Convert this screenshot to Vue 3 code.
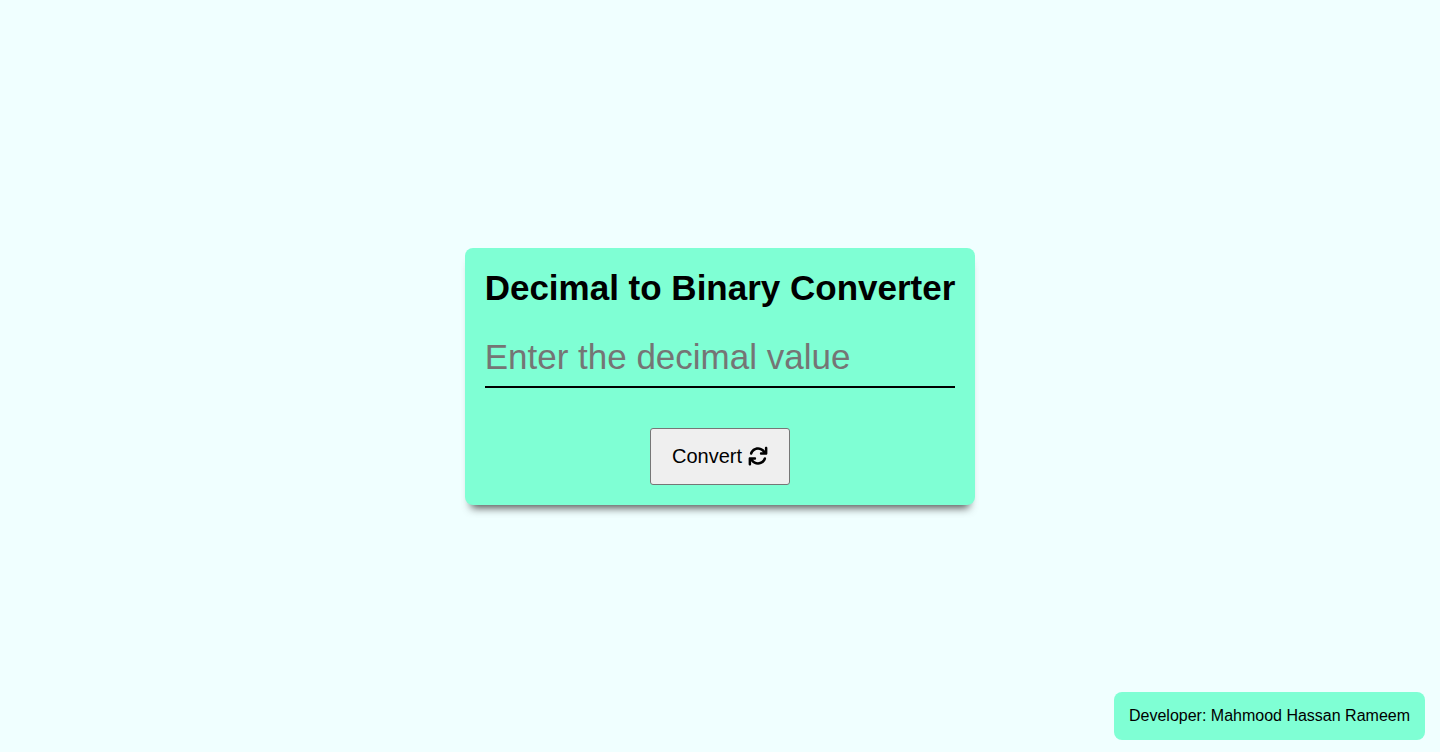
<script setup>
import { ref } from 'vue'

const value = ref('')

function convert() {
  if (/^\d+$/.test(value.value)) {
    value.value = BigInt(value.value).toString(2)
  }
}
</script>

<template>
  <div class="page">
    <main class="main">
      <form class="card" @submit.prevent="convert">
        <h1 class="title">Decimal to Binary Converter</h1>
        <input
          v-model="value"
          class="field"
          type="text"
          aria-label="Decimal value"
          placeholder="Enter the decimal value"
        />
        <button class="convert" type="submit">
          <span>Convert</span>
          <svg class="icon" viewBox="0 0 512 512" aria-hidden="true">
            <path
              fill="currentColor"
              d="M464 16c-17.67 0-32 14.31-32 32v74.09C392.1 66.52 327.4 32 256 32C161.5 32 78.59 92.34 49.58 182.2c-5.438 16.81 3.797 34.88 20.61 40.28c16.89 5.5 34.88-3.812 40.3-20.59C130.9 138.5 189.4 96 256 96c50.5 0 96.26 24.55 124.4 64H336c-17.67 0-32 14.31-32 32s14.33 32 32 32h128c17.67 0 32-14.31 32-32V48C496 30.31 481.7 16 464 16zM441.8 289.6c-16.92-5.438-34.88 3.812-40.3 20.59C381.1 373.5 322.6 416 256 416c-50.5 0-96.25-24.55-124.4-64H176c17.67 0 32-14.31 32-32s-14.33-32-32-32h-128c-17.67 0-32 14.31-32 32v144c0 17.69 14.33 32 32 32s32-14.31 32-32v-74.09C119.9 445.5 184.6 480 256 480c94.45 0 177.4-60.34 206.4-150.2C467.9 313 458.6 294.1 441.8 289.6z"
            />
          </svg>
        </button>
      </form>
    </main>
    <footer class="credit">Developer: Mahmood Hassan Rameem</footer>
  </div>
</template>

<style>
body {
  background: azure;
}
</style>

<style scoped>
.page {
  min-height: 100vh;
  display: grid;
  place-items: center;
  font-family: "Liberation Sans", Arial, sans-serif;
  color: #000;
}

.card {
  box-sizing: border-box;
  display: flex;
  flex-direction: column;
  align-items: center;
  padding: 20px;
  border-radius: 8px;
  background: aquamarine;
  box-shadow: 0 9px 8px -6px #555;
}

.title {
  margin: 0;
  font-size: 35px;
  line-height: 40px;
  font-weight: 700;
}

.field {
  box-sizing: border-box;
  width: 100%;
  min-width: 0;
  height: 60px;
  margin: 20px 0 40px;
  padding: 0;
  border: 0;
  border-bottom: 2px solid #000;
  background: transparent;
  font-family: inherit;
  font-size: 35px;
  outline: none;
}

.field::placeholder {
  color: #757575;
  opacity: 1;
}

.convert {
  display: flex;
  align-items: center;
  gap: 6px;
  padding: 16px 21px;
  border: 1px solid #767676;
  border-radius: 3px;
  background: #efefef;
  color: #000;
  font-family: inherit;
  font-size: 20px;
  line-height: 23px;
}

.icon {
  width: 20px;
  height: 20px;
}

.credit {
  position: fixed;
  right: 15px;
  bottom: 12px;
  padding: 15px;
  border-radius: 8px;
  background: aquamarine;
  font-size: 16px;
  line-height: 18px;
}
</style>
